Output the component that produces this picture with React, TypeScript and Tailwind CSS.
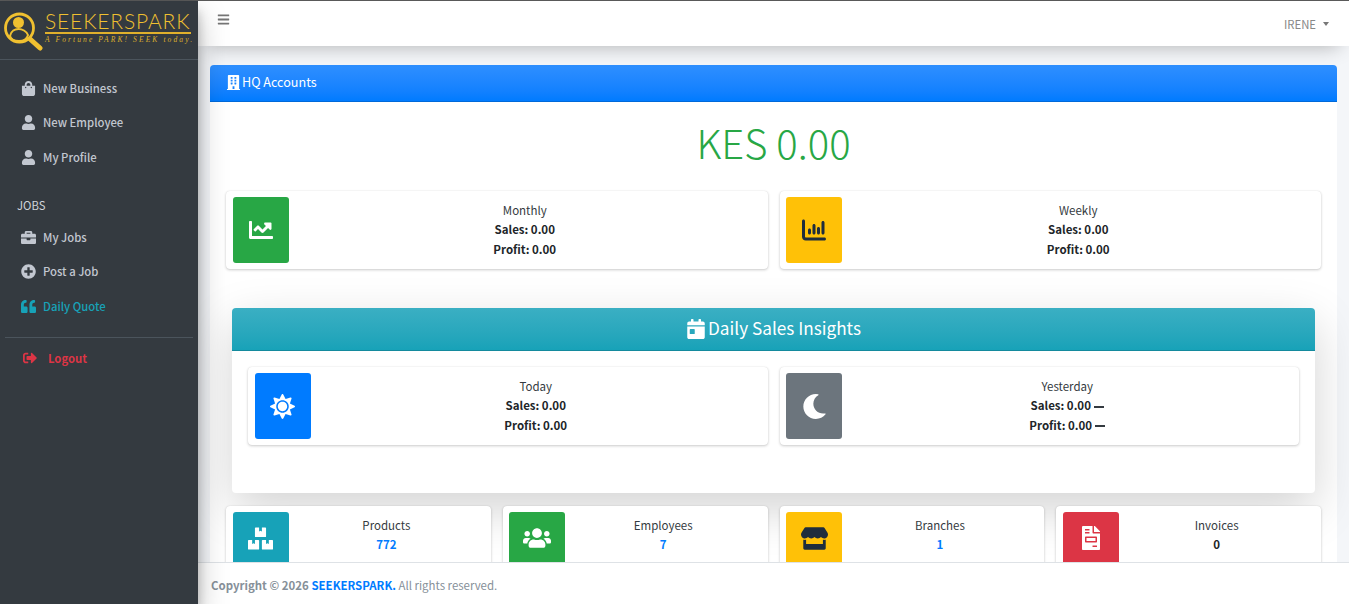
import React from "react";
import {
  FaShoppingBag, FaUser, FaBriefcase, FaPlusCircle, FaQuoteLeft, FaSignOutAlt, FaBars, FaBuilding,
  FaChartLine, FaSun, FaMoon, FaCalendarDay, FaBoxes, FaUsers, FaStore, FaFileInvoice,
} from "react-icons/fa";
import { FaChartColumn } from "react-icons/fa6";

function NavItem({ icon, label, className, mt }: { icon: React.ReactNode; label: string; className: string; mt: string }) {
  return (
    <div className={`flex items-center h-[20px] pl-[21px] text-[11.3px] font-medium ${className} ${mt}`}>
      <span className="w-[22px] flex text-[15px]">{icon}</span>
      <span>{label}</span>
    </div>
  );
}

function InfoBox({
  icon, color, title, lines, h = "h-[78px]",
}: { icon: React.ReactNode; color: string; title: string; lines: React.ReactNode[]; h?: string }) {
  return (
    <div className={`flex bg-white rounded px-[6.5px] py-[6px] shadow-[0_0_1px_rgba(0,0,0,0.125),0_1px_3px_rgba(0,0,0,0.2)] ${h}`}>
      <div className={`w-[56px] shrink-0 rounded-[3px] flex items-center justify-center ${color}`}>{icon}</div>
      <div className="flex-1 text-center text-[11.5px] leading-[19.5px] pt-[3.6px] text-[#343a40]">
        <div>{title}</div>
        {lines}
      </div>
    </div>
  );
}

const B = ({ children, className = "text-[#212529]" }: { children: React.ReactNode; className?: string }) => (
  <div className={`font-bold ${className}`}>{children}</div>
);

const Dash = () => <span className="inline-block w-[10px] h-[2px] ml-[3px] align-middle bg-[#343a40]" />;

export default function App() {
  return (
    <div className="h-screen overflow-hidden flex flex-col font-['Noto_Sans_CJK_JP','Noto_Sans',sans-serif] bg-[#f4f6f9]">
      <div className="h-px bg-[#5a5a5a] shrink-0" />
      <div className="flex flex-1 min-h-0">
        <aside className="relative z-20 w-[198px] shrink-0 bg-[#343a40] shadow-[0_14px_28px_rgba(0,0,0,0.25),0_10px_10px_rgba(0,0,0,0.22)]">
          <div className="h-[59px] border-b border-[#4b545c] flex pl-[4px] pt-[10px]">
            <svg width="40" height="40" viewBox="0 0 40 40" className="shrink-0" fill="none" stroke="#f0c030">
              <circle cx="15.5" cy="17" r="14" strokeWidth="2.8" />
              <circle cx="14.5" cy="11.5" r="5.5" fill="#f0c030" stroke="none" />
              <path d="M6 25c1-5 5-7 8.500-7s8 2 9.500 6c-1 4-5 6-9 6s-8-1-9-5z" strokeWidth="2" />
              <path d="M26 28l10 9" strokeWidth="5" strokeLinecap="round" />
            </svg>
            <div className="ml-[1px] w-[146px]">
              <div className="font-['Lato',sans-serif] font-light text-[#f0c030] text-[21px] leading-[20px] tracking-[0.85px] whitespace-nowrap border-b-2 border-[#e0b02c] h-[23px]">SEEKERSPARK</div>
              <div className="font-['Liberation_Serif',serif] italic text-[#dcae2c] text-[7.5px] leading-[10px] tracking-[2.1px] whitespace-nowrap mt-[1px]">A Fortune PARK! SEEK today.</div>
            </div>
          </div>
          <NavItem mt="mt-[18px]" className="text-[#c2c7d0]" icon={<FaShoppingBag />} label="New Business" />
          <NavItem mt="mt-[14.5px]" className="text-[#c2c7d0]" icon={<FaUser />} label="New Employee" />
          <NavItem mt="mt-[14.5px]" className="text-[#c2c7d0]" icon={<FaUser />} label="My Profile" />
          <div className="mt-[28px] pl-[17px] h-[20px] flex items-center text-[11.3px] text-[#d0d4db]">JOBS</div>
          <NavItem mt="mt-[12px]" className="text-[#c2c7d0]" icon={<FaBriefcase />} label="My Jobs" />
          <NavItem mt="mt-[14.5px]" className="text-[#c2c7d0]" icon={<FaPlusCircle />} label="Post a Job" />
          <NavItem mt="mt-[14.5px]" className="text-[#17a2b8]" icon={<FaQuoteLeft />} label="Daily Quote" />
          <div className="mt-[21px] mx-[5px] h-px bg-[#4b545c]" />
          <div className="mt-[10px] h-[20px] flex items-center pl-[23px] text-[11.3px] font-bold text-[#dc3545]">
            <span className="w-[25px] flex text-[14px]"><FaSignOutAlt /></span>
            <span>Logout</span>
          </div>
        </aside>

        <div className="flex-1 min-w-0 flex flex-col">
          <header className="relative z-10 h-[45px] shrink-0 bg-white flex items-start justify-between pl-[19px] pr-[20px] shadow-[0_10px_20px_-10px_rgba(0,0,0,0.3)]">
            <FaBars className="text-[#757575] text-[13px] mt-[12px]" />
            <div className="flex items-center text-[11.3px] text-[#888] mt-[14px] leading-[18px]">
              IRENE
              <span className="ml-[7px] w-0 h-0 border-x-[3.5px] border-x-transparent border-t-[4px] border-t-[#777]" />
            </div>
          </header>

          <main className="flex-1 min-h-0 overflow-hidden pt-[19px] px-[12px]">
            <div className="bg-white rounded-t">
              <div className="h-[37px] flex items-center pl-[16px] rounded-t text-white text-[12.6px] bg-gradient-to-b from-[#2e8fff] to-[#007bff] border-b border-[#0069d9]">
                <FaBuilding className="text-[15px] mr-[1px] -mt-[1px]" />
                <span className="-mt-[2px]">HQ Accounts</span>
              </div>
              <div className="px-[16px]">
                <div className="h-[89px] pb-[9px] flex items-center justify-center text-[#28a745] text-[40px] font-light leading-none">KES 0.00</div>
                <div className="grid grid-cols-2 gap-3">
                  <InfoBox color="bg-[#28a745] text-white" icon={<FaChartLine className="text-[24px]" />} title="Monthly" lines={[<B key="a">Sales: 0.00</B>, <B key="b">Profit: 0.00</B>]} />
                  <InfoBox color="bg-[#ffc107] text-[#1f2d3d]" icon={<FaChartColumn className="text-[24px]" />} title="Weekly" lines={[<B key="a">Sales: 0.00</B>, <B key="b">Profit: 0.00</B>]} />
                </div>

                <div className="mt-[39px] mx-[6px] rounded bg-white shadow-[0_16px_48px_rgba(0,0,0,0.175)] h-[185px]">
                  <div className="h-[43px] rounded-t flex items-center justify-center text-white text-[17.2px] bg-gradient-to-b from-[#3aafc3] to-[#17a2b8] border-b border-[#148a9d]">
                    <FaCalendarDay className="text-[20px] mr-[2px]" />
                    <span className="-mt-[2px]">Daily Sales Insights</span>
                  </div>
                  <div className="p-[16px] grid grid-cols-2 gap-3">
                    <InfoBox color="bg-[#007bff] text-white" icon={<FaSun className="text-[25px]" />} title="Today" lines={[<B key="a">Sales: 0.00</B>, <B key="b">Profit: 0.00</B>]} />
                    <InfoBox color="bg-[#6c757d] text-white" icon={<FaMoon className="text-[25px]" />} title="Yesterday" lines={[
                      <B key="a">Sales: 0.00<Dash /></B>,
                      <B key="b">Profit: 0.00<Dash /></B>,
                    ]} />
                  </div>
                </div>

                <div className="mt-[13px] grid grid-cols-4 gap-3">
                  <InfoBox h="h-[64px]" color="bg-[#17a2b8] text-white" icon={<FaBoxes className="text-[25px]" />} title="Products" lines={[<B key="a" className="text-[#007bff]">772</B>]} />
                  <InfoBox h="h-[64px]" color="bg-[#28a745] text-white" icon={<FaUsers className="text-[28px]" />} title="Employees" lines={[<B key="a" className="text-[#007bff]">7</B>]} />
                  <InfoBox h="h-[64px]" color="bg-[#ffc107] text-[#1f2d3d]" icon={<FaStore className="text-[27px]" />} title="Branches" lines={[<B key="a" className="text-[#007bff]">1</B>]} />
                  <InfoBox h="h-[64px]" color="bg-[#dc3545] text-white" icon={<FaFileInvoice className="text-[24px]" />} title="Invoices" lines={[<B key="a">0</B>]} />
                </div>
              </div>
            </div>
          </main>

          <footer className="relative z-10 h-[42px] shrink-0 bg-white border-t border-[#dee2e6] flex items-center pl-[13px] pt-[5px] text-[11.45px] text-[#869099]">
            <span className="font-bold">Copyright © 2026&nbsp;</span>
            <span className="font-bold text-[#007bff]">SEEKERSPARK.</span>
            <span>&nbsp;All rights reserved.</span>
          </footer>
        </div>
      </div>
    </div>
  );
}
